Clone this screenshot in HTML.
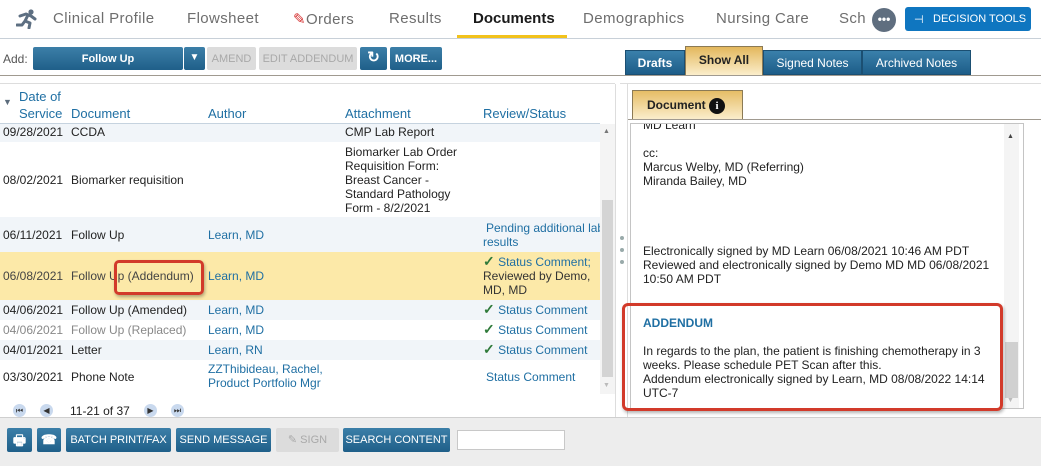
<!DOCTYPE html>
<html><head><meta charset="utf-8"><style>
*{box-sizing:border-box;margin:0;padding:0}
body{width:1041px;height:466px;overflow:hidden;background:#fff;font-family:"Liberation Sans",Arial,sans-serif;font-size:12px;color:#222;position:relative}
.a{position:absolute;white-space:nowrap}
.nav{font-size:15px;color:#6e6e6e;top:10px;letter-spacing:.4px}
.btn{position:absolute;background:linear-gradient(#3c7fa8,#1f5f89);color:#fff;font-size:11px;font-weight:bold;text-align:center;border-radius:2px}
.dis{background:#dcdcdc;color:#a9a9a9}
.lnk{color:#1f6fa3}
.row{position:absolute;left:0;width:600px}
.chk{color:#2f7a3a;font-weight:bold;font-size:14px}
.tab{position:absolute;top:50px;height:25px;background:linear-gradient(#3a80ab,#1d5d88);color:#fff;font-weight:bold;font-size:12px;text-align:center;line-height:25px;border:1px solid #1b4f72}
</style></head><body>
<svg class="a" style="left:16px;top:9px" width="24" height="20" viewBox="0 0 24 20"><circle cx="15" cy="3" r="2.6" fill="#5d6f82"/><path d="M4 7 L10 5 L15 7 L19 10 M12 6 L9 12 L14 14 L13 19 M9 12 L6 16 L1 16" stroke="#5d6f82" stroke-width="3" fill="none" stroke-linecap="round" stroke-linejoin="round"/></svg>
<div class="a nav" style="left:53px">Clinical Profile</div>
<div class="a nav" style="left:187px">Flowsheet</div>
<div class="a nav" style="left:293px;color:#6e6e6e"><span style="color:#d42b2b">✎</span>Orders</div>
<div class="a nav" style="left:389px">Results</div>
<div class="a nav" style="left:473px;color:#1a1a1a;font-weight:bold;letter-spacing:0">Documents</div>
<div class="a" style="left:457px;top:35px;width:110px;height:3px;background:#f2c21b"></div>
<div class="a nav" style="left:583px">Demographics</div>
<div class="a nav" style="left:716px">Nursing Care</div>
<div class="a nav" style="left:839px">Sch</div>
<div class="a" style="left:872px;top:8px;width:24px;height:24px;border-radius:50%;background:#5f6e7f;color:#fff;font-size:12px;text-align:center;line-height:22px;font-weight:bold">•••</div>
<div class="a" style="left:905px;top:7px;width:126px;height:24px;background:#0f76c0;border-radius:3px;color:#fff;font-size:11px;line-height:24px;padding-left:28px">DECISION TOOLS</div>
<div class="a" style="left:914px;top:13px;color:#fff;font-size:11px">⊣</div>
<div class="a" style="left:0;top:38px;width:1041px;height:1px;background:#c8d0d8"></div>
<div class="a" style="left:3px;top:52px;color:#555;font-size:12px">Add:</div>
<div class="btn" style="left:33px;top:47px;width:150px;height:23px;line-height:24px">Follow Up</div>
<div class="btn" style="left:184px;top:47px;width:21px;height:23px;line-height:22px;font-size:10px">▼</div>
<div class="btn dis" style="left:207px;top:47px;width:49px;height:23px;line-height:24px;font-weight:normal">AMEND</div>
<div class="btn dis" style="left:259px;top:47px;width:98px;height:23px;line-height:24px;font-weight:normal">EDIT ADDENDUM</div>
<div class="btn" style="left:360px;top:47px;width:27px;height:23px;line-height:22px;font-size:15px">↻</div>
<div class="btn" style="left:390px;top:47px;width:52px;height:23px;line-height:24px">MORE...</div>
<div class="a" style="left:0;top:75px;width:620px;height:1px;background:#a09a90"></div>
<div class="a" style="left:0;top:83px;width:615px;height:1px;background:#ddd"></div>
<div class="tab" style="left:625px;width:60px">Drafts</div>
<div class="tab" style="left:685px;top:46px;height:30px;width:78px;background:linear-gradient(#e3b75c,#fbeecb);color:#222;line-height:26px;border-color:#8b7a55">Show All</div>
<div class="tab" style="left:763px;width:99px;font-weight:normal">Signed Notes</div>
<div class="tab" style="left:862px;width:109px;font-weight:normal">Archived Notes</div>
<div class="a" style="left:620px;top:75px;width:421px;height:1px;background:#a09a90"></div>
<div class="a" style="left:620px;top:83px;width:421px;height:1px;background:#ddd"></div>
<div class="a lnk" style="left:3px;top:97px;font-size:9px;color:#5c6c7c">▼</div>
<div class="a lnk" style="left:19px;top:89px;font-size:13px">Date of</div>
<div class="a lnk" style="left:19px;top:106px;font-size:13px">Service</div>
<div class="a lnk" style="left:71px;top:106px;font-size:13px">Document</div>
<div class="a lnk" style="left:208px;top:106px;font-size:13px">Author</div>
<div class="a lnk" style="left:345px;top:106px;font-size:13px">Attachment</div>
<div class="a lnk" style="left:483px;top:106px;font-size:13px">Review/Status</div>
<div class="a" style="left:0;top:123px;width:600px;height:1px;background:#c6d3df"></div>
<div class="row" style="top:124px;height:18px;background:#f1f5f9"></div>
<div class="row" style="top:217px;height:35px;background:#f1f5f9"></div>
<div class="row" style="top:252px;height:48px;background:#fce9a8"></div>
<div class="row" style="top:300px;height:20px;background:#f1f5f9"></div>
<div class="row" style="top:340px;height:20px;background:#f1f5f9"></div>
<div class="a" style="left:3px;top:125px">09/28/2021</div><div class="a" style="left:71px;top:125px">CCDA</div><div class="a" style="left:345px;top:125px">CMP Lab Report</div>
<div class="a" style="left:3px;top:173px">08/02/2021</div><div class="a" style="left:71px;top:173px">Biomarker requisition</div>
<div class="a" style="left:345px;top:145px;line-height:14px">Biomarker Lab Order<br>Requisition Form:<br>Breast Cancer -<br>Standard Pathology<br>Form - 8/2/2021</div>
<div class="a" style="left:3px;top:228px">06/11/2021</div><div class="a" style="left:71px;top:228px">Follow Up</div><div class="a lnk" style="left:208px;top:228px">Learn, MD</div>
<div class="a lnk" style="left:486px;top:221px;line-height:14px">Pending additional lab<br><span style="margin-left:-3px">results</span></div>
<div class="a" style="left:3px;top:269px;color:#444">06/08/2021</div><div class="a" style="left:71px;top:269px;color:#444">Follow Up (Addendum)</div><div class="a lnk" style="left:208px;top:269px">Learn, MD</div>
<div class="a" style="left:483px;top:254px;line-height:14px;color:#333"><span class="chk">✓</span> <span class="lnk">Status Comment;</span><br>Reviewed by Demo,<br>MD, MD</div>
<div class="a" style="left:3px;top:303px">04/06/2021</div><div class="a" style="left:71px;top:303px">Follow Up (Amended)</div><div class="a lnk" style="left:208px;top:303px">Learn, MD</div><div class="a lnk" style="left:483px;top:301px"><span class="chk">✓</span> Status Comment</div>
<div class="a" style="left:3px;top:323px;color:#888">04/06/2021</div><div class="a" style="left:71px;top:323px;color:#888">Follow Up (Replaced)</div><div class="a lnk" style="left:208px;top:323px">Learn, MD</div><div class="a lnk" style="left:483px;top:321px"><span class="chk">✓</span> Status Comment</div>
<div class="a" style="left:3px;top:343px">04/01/2021</div><div class="a" style="left:71px;top:343px">Letter</div><div class="a lnk" style="left:208px;top:343px">Learn, RN</div><div class="a lnk" style="left:483px;top:341px"><span class="chk">✓</span> Status Comment</div>
<div class="a" style="left:3px;top:370px">03/30/2021</div><div class="a" style="left:71px;top:370px">Phone Note</div><div class="a lnk" style="left:208px;top:362px;line-height:14px">ZZThibideau, Rachel,<br>Product Portfolio Mgr</div><div class="a lnk" style="left:486px;top:370px">Status Comment</div>
<div class="a" style="left:114px;top:260px;width:90px;height:35px;border:3px solid #d23a2a;border-radius:5px;box-shadow:1px 2px 3px rgba(0,0,0,.3)"></div>
<div class="a" style="left:600px;top:124px;width:15px;height:270px;background:#f4f4f4"></div>
<div class="a" style="left:602px;top:200px;width:11px;height:177px;background:#d4d4d4"></div>
<div class="a" style="left:603px;top:128px;font-size:7px;color:#777">▲</div>
<div class="a" style="left:603px;top:382px;font-size:7px;color:#bbb">▼</div>
<div class="a" style="left:615px;top:84px;width:1px;height:333px;background:#ddd"></div>
<div class="a" style="left:627px;top:84px;width:1px;height:333px;background:#ddd"></div>
<div class="a" style="left:620px;top:236px;width:4px;height:4px;border-radius:50%;background:#9aa"></div>
<div class="a" style="left:620px;top:248px;width:4px;height:4px;border-radius:50%;background:#9aa"></div>
<div class="a" style="left:620px;top:260px;width:4px;height:4px;border-radius:50%;background:#9aa"></div>
<div class="a" style="left:13px;top:404px;width:13px;height:13px;border-radius:50%;background:#c9d9ee;font-size:8px;text-align:center;line-height:13px;color:#333">⏮</div>
<div class="a" style="left:40px;top:404px;width:13px;height:13px;border-radius:50%;background:#c9d9ee;font-size:8px;text-align:center;line-height:13px;color:#333">◀</div>
<div class="a" style="left:70px;top:404px;font-size:12px">11-21 of 37</div>
<div class="a" style="left:144px;top:404px;width:13px;height:13px;border-radius:50%;background:#c9d9ee;font-size:8px;text-align:center;line-height:13px;color:#333">▶</div>
<div class="a" style="left:171px;top:404px;width:13px;height:13px;border-radius:50%;background:#c9d9ee;font-size:8px;text-align:center;line-height:13px;color:#333">⏭</div>
<div class="a" style="left:632px;top:90px;width:111px;height:30px;background:linear-gradient(#e6bd66,#fbefcf);border:1px solid #8b7a55;border-bottom:none;font-weight:bold;font-size:12px;padding:7px 0 0 14px">Document <span style="display:inline-block;width:16px;height:16px;border-radius:50%;background:#111;color:#fff;text-align:center;font-size:11px;line-height:16px;font-family:'Liberation Serif',serif">i</span></div>
<div class="a" style="left:628px;top:119px;width:413px;height:1px;background:#a09a90"></div>
<div class="a" style="left:630px;top:123px;width:394px;height:286px;border:1px solid #c4c4c4;overflow:hidden;font-size:12px;line-height:14px">
<div style="position:absolute;left:12px;top:-6px">MD Learn</div>
<div style="position:absolute;left:12px;top:22px">cc:<br>Marcus Welby, MD (Referring)<br>Miranda Bailey, MD</div>
<div style="position:absolute;left:12px;top:120px">Electronically signed by MD Learn 06/08/2021 10:46 AM PDT<br>Reviewed and electronically signed by Demo MD MD 06/08/2021<br>10:50 AM PDT</div>
<div style="position:absolute;left:12px;top:192px;color:#1f6fa3;font-weight:bold">ADDENDUM</div>
<div style="position:absolute;left:12px;top:220px">In regards to the plan, the patient is finishing chemotherapy in 3<br>weeks. Please schedule PET Scan after this.<br>Addendum electronically signed by Learn, MD 08/08/2022 14:14<br>UTC-7</div>
<div style="position:absolute;left:373px;top:0;width:15px;height:285px;background:#f4f4f4"></div>
<div style="position:absolute;left:374px;top:218px;width:13px;height:56px;background:#d0d0d0"></div>
<div style="position:absolute;left:376px;top:6px;font-size:7px;color:#444">▲</div>
<div style="position:absolute;left:376px;top:270px;font-size:7px;color:#bbb">▼</div>
</div>
<div class="a" style="left:622px;top:303px;width:381px;height:108px;border:3px solid #d23a2a;border-radius:6px;box-shadow:1px 2px 3px rgba(0,0,0,.3)"></div>
<div class="a" style="left:0;top:417px;width:1041px;height:49px;background:#ededed;border-top:1px solid #cfcfcf"></div>
<div class="btn" style="left:7px;top:428px;width:25px;height:24px;line-height:24px;font-size:14px">🖶</div>
<div class="btn" style="left:37px;top:428px;width:24px;height:24px;line-height:24px;font-size:13px">☎</div>
<div class="btn" style="left:66px;top:428px;width:105px;height:24px;line-height:24px;font-weight:normal">BATCH PRINT/FAX</div>
<div class="btn" style="left:176px;top:428px;width:95px;height:24px;line-height:24px;font-weight:normal">SEND MESSAGE</div>
<div class="btn dis" style="left:276px;top:428px;width:63px;height:24px;line-height:24px;font-weight:normal">✎ SIGN</div>
<div class="btn" style="left:343px;top:428px;width:107px;height:24px;line-height:24px;font-weight:normal">SEARCH CONTENT</div>
<div class="a" style="left:457px;top:430px;width:108px;height:20px;background:#fff;border:1px solid #c8c8c8"></div>
</body></html>
